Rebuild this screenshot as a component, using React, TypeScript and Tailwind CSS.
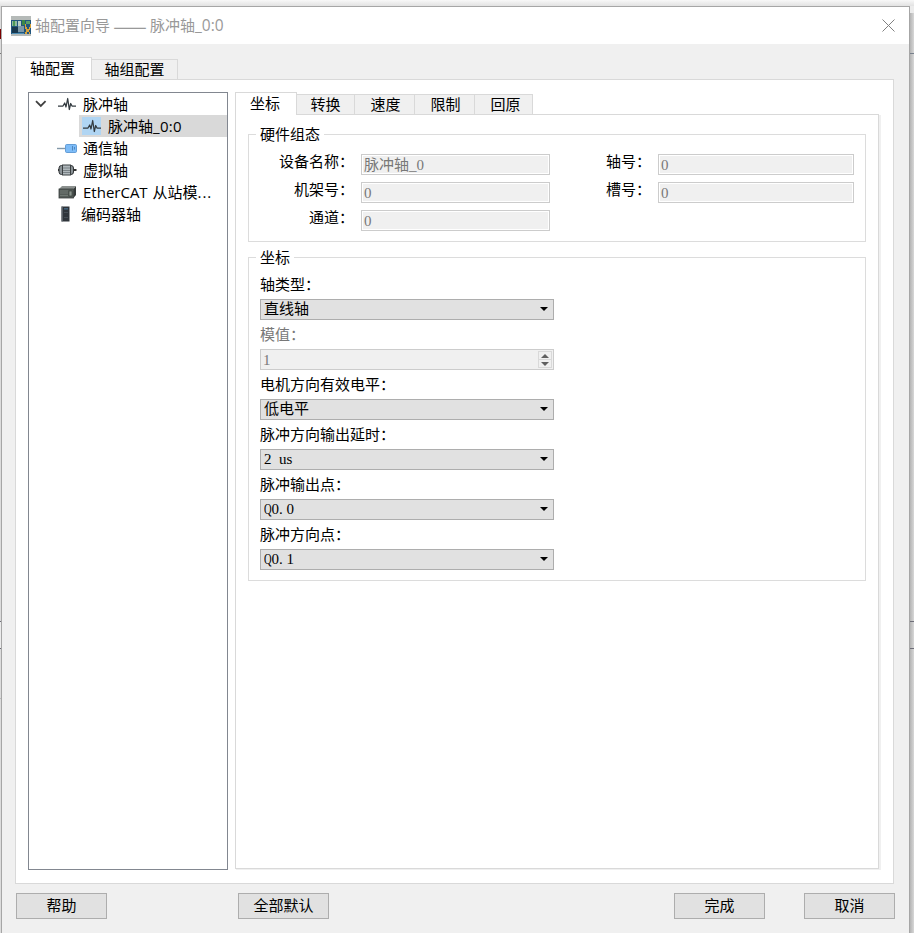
import React from "react";

const SONG = "font-['Liberation_Serif','Noto_Sans_CJK_SC',serif]";
const UI = "font-['Open_Sans','Noto_Sans_CJK_SC',sans-serif]";

function AppIcon() {
  return (
    <svg width="20" height="20" viewBox="0 0 20 20" className="shrink-0" shapeRendering="crispEdges">
      <rect width="20" height="20" fill="#b5bab8" />
      <rect y="4" width="20" height="14" fill="#22577f" />
      <rect x="1" y="5" width="5" height="5" fill="#8fb9a0" />
      <rect x="2" y="5" width="2" height="5" fill="#4d9a58" />
      <rect x="7" y="5" width="3" height="6" fill="#b9cfc9" />
      <rect x="11" y="4" width="3" height="5" fill="#3c8a46" />
      <rect x="15" y="5" width="4" height="3" fill="#5aa06a" />
      <rect x="1" y="11" width="6" height="6" fill="#18384f" />
      <rect x="7" y="10" width="6" height="6" fill="#7c98a8" />
      <rect x="1" y="17" width="12" height="1" fill="#4f8fb5" />
      <path d="M14 8h1v3h1v2h2v-2h1V8h1v4h-1v2h-1v2h1v2h-1v-2h-2v2h-2v-2h1v-3h-1z" fill="#d8a33a" />
    </svg>
  );
}

function PulseIcon() {
  return (
    <svg width="18" height="16" viewBox="0 0 18 16" fill="none">
      <path d="M0 10H5L6.7 7L8 11L9.7 2.5L11.3 13.5L12.7 7.5L14 10H18" stroke="#333b40" strokeWidth="1.25" strokeLinejoin="round" />
    </svg>
  );
}

function CommIcon() {
  return (
    <svg width="20" height="12" viewBox="0 0 20 12">
      <path d="M0 6.5H9" stroke="#8297a8" strokeWidth="1.4" />
      <rect x="8.5" y="2.5" width="11" height="8" rx="1.2" fill="#7dbcf8" stroke="#649dd6" />
      <path d="M15.5 4v4.5M17.5 5v2.5" stroke="#4f86bd" />
    </svg>
  );
}

function MotorIcon() {
  return (
    <svg width="20" height="14" viewBox="0 0 20 14">
      <path d="M1 7H19.5" stroke="#333" strokeWidth="2" />
      <rect x="2" y="2.5" width="14.5" height="9" rx="2.5" fill="#8b9397" stroke="#303437" />
      <rect x="5.5" y="2" width="8" height="10" fill="#b0b8bc" stroke="#3b4042" />
      <path d="M6 5h7M6 7.5h7M6 9.5h7" stroke="#7b8387" />
    </svg>
  );
}

function SlaveIcon() {
  return (
    <svg width="19" height="14" viewBox="0 0 19 14">
      <path d="M1 4L4 1H18L15.5 4Z" fill="#8c918f" />
      <path d="M15.5 4L18 1V10L15.5 13Z" fill="#343938" />
      <rect x="1" y="4" width="14.5" height="9" fill="#555d59" stroke="#383e3c" strokeWidth=".8" />
      <path d="M2 6h8M2 8h8M2 10.5h8" stroke="#7c8580" strokeWidth=".7" />
      <rect x="11" y="6" width="3" height="5" fill="#8b958e" stroke="#303633" strokeWidth=".6" />
    </svg>
  );
}

function EncoderIcon() {
  return (
    <svg width="9" height="16" viewBox="0 0 9 16">
      <rect x=".5" y=".5" width="8" height="15" fill="#2f353b" />
      <rect x=".5" y=".5" width="1.2" height="15" fill="#6b7279" />
      <rect x="3" y="2" width="4" height="1.6" fill="#43617b" />
      <path d="M3 6.5h4M3 11.5h4" stroke="#4b545c" strokeWidth=".8" />
    </svg>
  );
}

function Tab({ label, active, className }: { label: string; active?: boolean; className: string }) {
  return (
    <div
      className={`box-border flex justify-center border-[#d9d9d9] text-[15px] ${
        active
          ? "relative -mb-px h-[23px] border-x border-t bg-white pr-[2px] leading-[22px]"
          : "mt-[2px] h-[20px] border-t border-r bg-[#f0f0f0] leading-[20px]"
      } ${className}`}
    >
      {label}
    </div>
  );
}

function TreeRow({ icon, label, pad }: { icon: React.ReactNode; label: React.ReactNode; pad: string }) {
  return (
    <div className={`flex h-[22px] items-center whitespace-nowrap text-[15px] leading-[22px] ${pad}`}>
      {icon}
      <span>{label}</span>
    </div>
  );
}

function Group({ title, className, children }: { title: string; className: string; children: React.ReactNode }) {
  return (
    <section className={`border border-[#dcdcdc] ${className}`}>
      <h2 className="-mt-[11px] ml-[7px] h-[20px] w-fit bg-white px-1 text-[15px] leading-[22px]">{title}</h2>
      {children}
    </section>
  );
}

function Label({ children }: { children: React.ReactNode }) {
  return <div className="h-[21px] text-right text-[15px] leading-[17px]">{children}</div>;
}

function Field({ value, className }: { value: string; className: string }) {
  return (
    <div className={`h-[21px] border border-[#cccccc] bg-[#f0f0f0] pl-[2px] text-[15px] leading-[20px] text-[#787878] shadow-[inset_0_0_0_1px_white] ${className}`}>
      {value}
    </div>
  );
}

function Combo({ label, children }: { label: string; children: React.ReactNode }) {
  return (
    <div>
      <div className="h-[29px] text-[15px] leading-[30px]">{label}</div>
      <div className="flex h-[21px] items-center justify-between border border-[#adadad] bg-[#e1e1e1] pr-[5px] pl-[3px] text-[15px] leading-[19px]">
        <span>{children}</span>
        <svg width="8" height="4" viewBox="0 0 8 4" className="-mt-px">
          <path d="M0 0H8L4 4Z" fill="#000" />
        </svg>
      </div>
    </div>
  );
}

function Address({ tail }: { tail: string }) {
  return (
    <>
      <span className="inline-block w-[7.5px] origin-left scale-x-[.7]">Q</span>0
      <span className="tracking-[3.75px]">.</span>
      {tail}
    </>
  );
}

function Button({ label, className }: { label: string; className: string }) {
  return (
    <button className={`h-[26px] w-[91px] border border-[#adadad] bg-[#e1e1e1] text-[15px] leading-[25px] ${className}`}>
      {label}
    </button>
  );
}

export default function App() {
  return (
    <div className={`h-[933px] w-[914px] overflow-hidden bg-[#ececec] text-black ${SONG}`}>
      <div className="h-[6px] bg-linear-to-b from-[#f8f8f8] to-[#e2e2e2]" />
      <div className="flex h-[927px]">
        <div className="w-px shrink-0 bg-[#dcdcdc]">
          <div className="h-[23px]" />
          <div className="h-[10px] bg-[#7a0000]" />
          <div className="h-[14px]" />
          <div className="h-px bg-[#777777]" />
          <div className="h-[567px]" />
          <div className="h-px bg-[#6e6e78]" />
          <div className="h-[26px] bg-[#ececec]" />
          <div className="h-px bg-[#6e6e78]" />
          <div className="h-[49px]" />
          <div className="h-px bg-[#bbbbbb]" />
        </div>

        <main className="flex w-[909px] shrink-0 flex-col border-x border-t border-[#a6a6a6] bg-[#f0f0f0]">
          <header className={`flex h-[37px] shrink-0 items-center bg-white pr-[14px] pl-[9px] text-[15px] text-[#999999] ${UI}`}>
            <AppIcon />
            <div className="ml-[5px] flex items-center whitespace-pre">
              <span className="-ml-px">轴配置向导</span>
              <span className="flex h-[20px] w-[40px] items-center justify-center font-['Noto_Sans_CJK_SC',sans-serif] text-[20px] leading-[20px]">——</span>
              <span>脉冲轴<span className="text-[15.5px]">_0:0</span></span>
            </div>
            <svg width="13" height="13" viewBox="0 0 13 13" className="ml-auto" fill="none">
              <path d="M.5.5L12.5 12.5M12.5.5L.5 12.5" stroke="#808080" />
            </svg>
          </header>

          <div className="pt-[13px] pl-[13px]">
            <div className="flex h-[22px]">
              <Tab label="轴配置" active className="w-[77px]" />
              <Tab label="轴组配置" className="w-[86px]" />
            </div>
            <div className="flex h-[805px] w-[879px] gap-[7px] border border-[#d9d9d9] bg-white pt-[12px] pl-[12px]">
              <nav className={`h-[778px] w-[200px] overflow-hidden border border-[#828790] ${UI}`}>
                <TreeRow
                  pad="pl-[6px]"
                  label="脉冲轴"
                  icon={
                    <>
                      <svg width="12" height="8" viewBox="0 0 12 8" fill="none" className="mr-[11px]">
                        <path d="M1 1.2L5.8 6L10.6 1.2" stroke="#404040" strokeWidth="1.8" />
                      </svg>
                      <span className="mr-[7px]"><PulseIcon /></span>
                    </>
                  }
                />
                <div className="ml-[50px] bg-[#d9d9d9]">
                  <TreeRow
                    pad="pl-[3px]"
                    label={<>脉冲轴<span className="tracking-[0.3px]">_0:0</span></>}
                    icon={<span className="mr-[7px] flex h-[18px] w-[19px] items-center justify-center bg-[#b0d5f3]"><PulseIcon /></span>}
                  />
                </div>
                <TreeRow pad="pl-[28px]" label="通信轴" icon={<span className="mr-[6px]"><CommIcon /></span>} />
                <TreeRow pad="pl-[28px]" label="虚拟轴" icon={<span className="mr-[6px]"><MotorIcon /></span>} />
                <TreeRow
                  pad="pl-[29px]"
                  label={<>EtherCAT <span className="ml-px">从站模</span><span className="tracking-[0.9px]">...</span></>}
                  icon={<span className="mr-[6px]"><SlaveIcon /></span>}
                />
                <TreeRow pad="pl-[32px]" label="编码器轴" icon={<span className="mr-[11px]"><EncoderIcon /></span>} />
              </nav>

              <div>
                <div className="flex h-[22px]">
                  <Tab label="坐标" active className="w-[62px]" />
                  <Tab label="转换" className="w-[58px]" />
                  <Tab label="速度" className="w-[60px] pl-[2px]" />
                  <Tab label="限制" className="w-[60px] pl-[2px]" />
                  <Tab label="回原" className="w-[58px] pl-[4px]" />
                </div>
                <div className="h-[755px] w-[644px] border border-[#d9d9d9] pt-[19px] pl-[12px] shadow-[1px_1px_0_#f0f0f0,2px_1px_0_#f0f0f0]">
                  <Group title="硬件组态" className="h-[108px] w-[618px]">
                    <div className="mt-[10px] grid grid-cols-[105px_189px_108px_196px] gap-y-[7px]">
                      <Label>设备名称：</Label>
                      <Field value="脉冲轴_0" className="ml-[7px] w-[189px]" />
                      <Label>轴号：</Label>
                      <Field value="0" className="ml-[7px] w-[196px]" />
                      <Label>机架号：</Label>
                      <Field value="0" className="ml-[7px] w-[189px]" />
                      <Label>槽号：</Label>
                      <Field value="0" className="ml-[7px] w-[196px]" />
                      <Label>通道：</Label>
                      <Field value="0" className="ml-[7px] w-[189px]" />
                    </div>
                  </Group>

                  <Group title="坐标" className="mt-[15px] h-[324px] w-[618px]">
                    <div className="mt-[3px] ml-[11px] w-[294px]">
                      <Combo label="轴类型：">直线轴</Combo>
                      <div>
                        <div className="h-[29px] text-[15px] leading-[30px] text-[#787878]">模值：</div>
                        <div className="flex h-[21px] justify-between border border-[#cccccc] bg-[#f0f0f0] pt-px pr-px pl-[2px] text-[15px] leading-[19px] text-[#787878]">
                          <span>1</span>
                          <span className="flex h-[17px] w-[14px] flex-col border border-[#d9d9d9]">
                            <span className="flex h-[8px] items-center justify-center border-b border-[#d9d9d9]">
                              <svg width="8" height="4" viewBox="0 0 8 4"><path d="M0 4H8L4 0Z" fill="#606060" /></svg>
                            </span>
                            <span className="flex h-[7px] items-center justify-center">
                              <svg width="8" height="4" viewBox="0 0 8 4"><path d="M0 0H8L4 4Z" fill="#606060" /></svg>
                            </span>
                          </span>
                        </div>
                      </div>
                      <Combo label="电机方向有效电平：">低电平</Combo>
                      <Combo label="脉冲方向输出延时："><span className="[word-spacing:3.75px]">2 us</span></Combo>
                      <Combo label="脉冲输出点："><Address tail="0" /></Combo>
                      <Combo label="脉冲方向点："><Address tail="1" /></Combo>
                    </div>
                  </Group>
                </div>
              </div>
            </div>

            <footer className="mt-[9px] ml-px flex">
              <Button label="帮助" className="mr-[131px]" />
              <Button label="全部默认" className="mr-[345px]" />
              <Button label="完成" className="mr-[39px]" />
              <Button label="取消" className="mr-0" />
            </footer>
          </div>
        </main>

        <div className="w-[4px] shrink-0 bg-linear-to-r from-[#b4b4b4] to-[#d8d8d8]">
          <div className="h-[7px] bg-[#ececec]" />
          <div className="h-[40px]" />
          <div className="h-px bg-[#77808c]" />
          <div className="h-[567px]" />
          <div className="h-px bg-[#6e6e78]" />
          <div className="h-[26px]" />
          <div className="h-px bg-[#6e6e78]" />
        </div>
      </div>
    </div>
  );
}
